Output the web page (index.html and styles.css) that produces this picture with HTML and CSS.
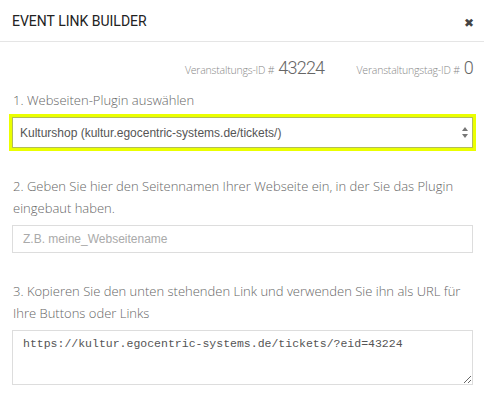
FILE: index.html
```html
<!DOCTYPE html>
<html lang="de">
<head>
  <meta charset="UTF-8">
  <title>Event Link Builder</title>
  <link rel="stylesheet" href="styles.css">
</head>
<body>
  <div class="modal">
    <div class="modal-header">
      <h4>EVENT LINK BUILDER</h4>
      <span class="close">&#10006;</span>
    </div>

    <div class="modal-body">
      <div class="ids">
        <span class="id-label">Veranstaltungs-ID #</span><span class="id-value">43224</span>
        <span class="id-label second">Veranstaltungstag-ID #</span><span class="id-value">0</span>
      </div>

      <label class="step">1. Webseiten-Plugin auswählen</label>
      <div class="select-wrap">
        <select class="field select">
          <option>Kulturshop (kultur.egocentric-systems.de/tickets/)</option>
        </select>
        <svg class="arrows" width="6" height="11" viewBox="0 0 6 11">
          <path d="M3 0 L6 4 H0 Z M3 11 L6 7 H0 Z" fill="#777"/>
        </svg>
      </div>

      <label class="step">2. Geben Sie hier den Seitennamen Ihrer Webseite ein, in der Sie das Plugin eingebaut haben.</label>
      <input type="text" class="field" placeholder="Z.B. meine_Webseitename">

      <label class="step">3. Kopieren Sie den unten stehenden Link und verwenden Sie ihn als URL für Ihre Buttons oder Links</label>
      <textarea class="field link" rows="3">https://kultur.egocentric-systems.de/tickets/?eid=43224</textarea>
    </div>
  </div>
</body>
</html>
```

FILE: styles.css
```css
body {
  margin: 0;
  background: #fff;
  font-family: "Open Sans", Arial, sans-serif;
  color: #333;
}
.modal {
  width: 484px;
}
.modal-header {
  display: flex;
  justify-content: space-between;
  align-items: center;
  height: 42px;
  padding: 0 10px 0 12px;
  border-bottom: 1px solid #e5e5e5;
  box-sizing: border-box;
}
.modal-header h4 {
  margin: 0;
  font-family: Roboto, Arial, sans-serif;
  font-weight: 400;
  font-size: 14px;
  color: #222;
}
.close {
  font-size: 12px;
  color: #444;
  margin-top: 4px;
}
.modal-body {
  padding: 15px 11px 20px 12px;
}
.ids {
  text-align: right;
  color: #888;
  font-weight: 300;
  height: 32px;
}
.id-label {
  font-size: 10.5px;
  letter-spacing: -0.2px;
}
.id-label.second {
  margin-left: 28px;
}
.id-value {
  font-family: Roboto, Arial, sans-serif;
  font-weight: 300;
  font-size: 18px;
  letter-spacing: -0.8px;
  color: #666;
  margin-left: 4px;
}
.step {
  display: block;
  font-size: 13px;
  font-weight: 300;
  line-height: 22px;
  color: #666;
  margin: 0 0 6px 1px;
}
.field {
  display: block;
  width: 100%;
  box-sizing: border-box;
  border: 1px solid #ddd;
  background: #fff;
  font-family: Arial, sans-serif;
  font-size: 12px;
  color: #333;
  margin-bottom: 27px;
}
.select-wrap {
  position: relative;
  margin-bottom: 27px;
}
.select {
  -webkit-appearance: none;
  appearance: none;
  height: 31px;
  padding: 0 24px 0 7px;
  border: 1px solid #b2bd5a;
  outline: 3px solid #ebff00;
  color: #555;
  margin: 0;
}
.arrows {
  position: absolute;
  right: 5px;
  top: 10px;
  pointer-events: none;
}
input.field {
  height: 28px;
  padding: 0 10px;
  font-size: 12px;
}
input.field::placeholder {
  color: #aaa;
}
.link {
  height: 55px;
  padding: 6px 10px;
  font-family: "Liberation Mono", "Courier New", monospace;
  font-size: 11.5px;
  color: #555;
  margin-bottom: 0;
}
```
